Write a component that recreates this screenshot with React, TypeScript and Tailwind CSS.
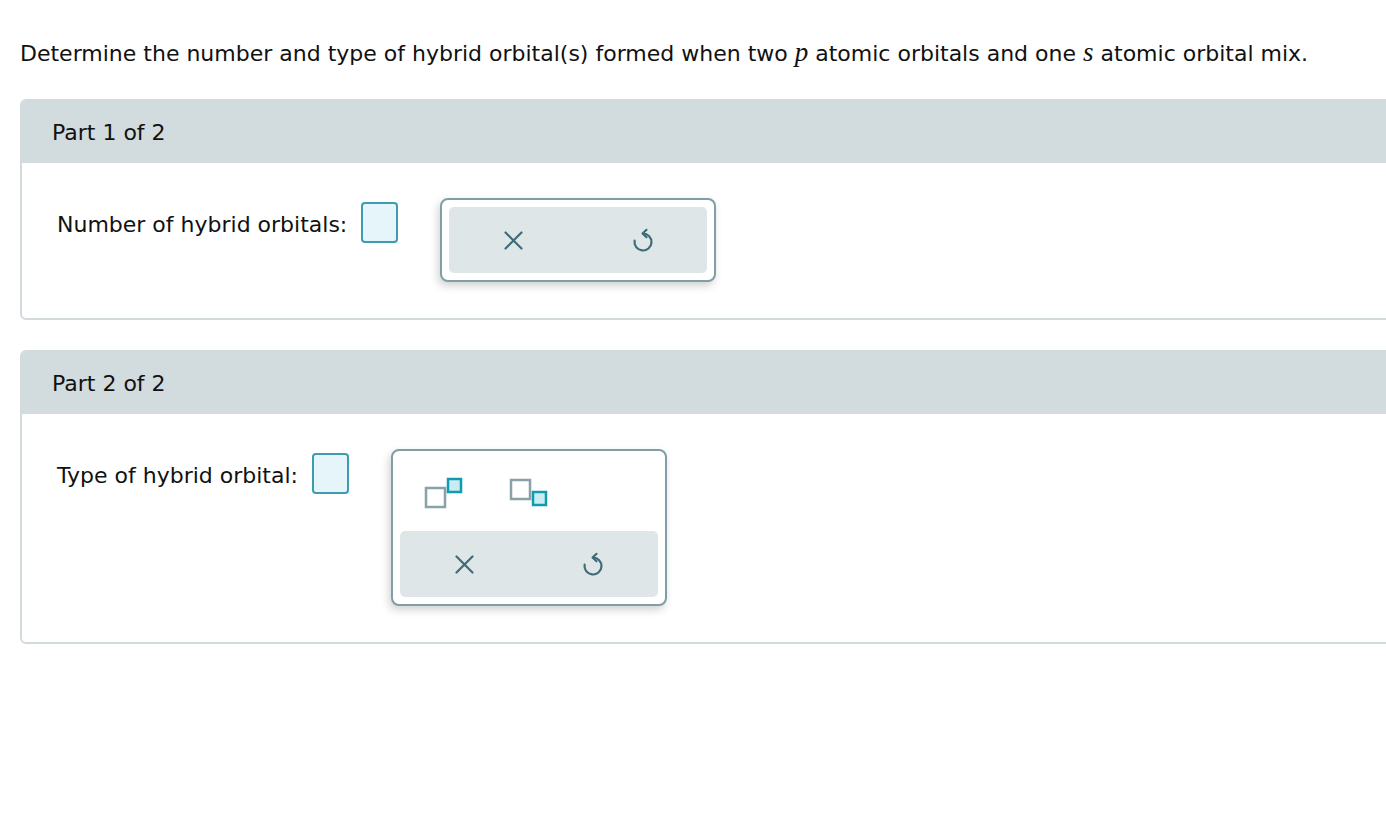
import { ReactNode } from "react"

const font = { fontFamily: '"DejaVu Sans", Verdana, sans-serif' }
const serif = { fontFamily: '"Liberation Serif", "Times New Roman", serif' }

function CloseIcon() {
  return (
    <svg width="19" height="19" viewBox="0 0 19 19" fill="none" stroke="#3e6b78" strokeWidth="2.2" strokeLinecap="round">
      <path d="M1.5 1.5 L17.5 17.5 M17.5 1.5 L1.5 17.5" />
    </svg>
  )
}

function UndoIcon() {
  return (
    <svg width="22" height="24" viewBox="0 0 22 24" fill="none" stroke="#3e6b78" strokeWidth="2.2" strokeLinecap="round" strokeLinejoin="round">
      <path d="M11 5.5 A8.5 8.5 0 1 1 2.6 12.6" />
      <path d="M14.5 1.8 L10.6 5.5 L14.5 9.2" />
    </svg>
  )
}

function SuperIcon() {
  return (
    <svg width="40" height="32" viewBox="0 0 40 32">
      <rect x="2" y="11" width="19" height="19" fill="white" stroke="#89a1a8" strokeWidth="2.5" />
      <rect x="24" y="2" width="13" height="13" fill="#c9ecf3" stroke="#0f9bb0" strokeWidth="2.5" />
    </svg>
  )
}

function SubIcon() {
  return (
    <svg width="40" height="30" viewBox="0 0 40 30">
      <rect x="2" y="2" width="19" height="19" fill="white" stroke="#89a1a8" strokeWidth="2.5" />
      <rect x="24" y="14" width="13" height="13" fill="#c9ecf3" stroke="#0f9bb0" strokeWidth="2.5" />
    </svg>
  )
}

function ActionBar() {
  return (
    <div className="flex h-[66px] w-[258px] rounded-[5px] bg-[#dfe6e8]">
      <button className="flex flex-1 items-center justify-center">
        <CloseIcon />
      </button>
      <button className="flex flex-1 items-center justify-center">
        <UndoIcon />
      </button>
    </div>
  )
}

function AnswerBox() {
  return <div className="h-[41px] w-[37px] rounded-[4px] border-2 border-[#3c9db1] bg-[#e6f5f9]" />
}

function Part({ title, label, children }: { title: string; label: string; children: ReactNode }) {
  return (
    <section className="w-[1400px] overflow-hidden rounded-l-[6px] border-2 border-[#d3dadd]">
      <div className="flex h-[62px] items-center bg-[#d2dbde] pl-[30px] text-[22px] text-[#111]">{title}</div>
      <div className="flex items-start pb-[36px] pl-[35px] pt-[35px]">
        <div className="flex items-center pt-[4px]">
          <span className="pt-[4px] text-[22px] leading-[28px] text-[#111]">{label}</span>
          <span className="ml-[14px]">
            <AnswerBox />
          </span>
        </div>
        <div className="ml-[42px] rounded-[8px] border-2 border-[#7f9ea6] bg-white p-[7px] shadow-[-2px_4px_8px_rgba(0,0,0,0.18)]">
          {children}
        </div>
      </div>
    </section>
  )
}

export default function App() {
  return (
    <div className="h-[826px] w-[1386px] overflow-hidden bg-white" style={font}>
      <div className="pl-[20px] pt-[37px]">
        <p className="text-[22px] leading-[30px] text-[#111]">
          Determine the number and type of hybrid orbital(s) formed when two{" "}
          <span className="text-[27px] italic" style={serif}>p</span> atomic orbitals and one{" "}
          <span className="text-[27px] italic" style={serif}>s</span> atomic orbital mix.
        </p>
        <div className="mt-[30px] flex flex-col gap-[30px]">
          <Part title="Part 1 of 2" label="Number of hybrid orbitals:">
            <ActionBar />
          </Part>
          <Part title="Part 2 of 2" label="Type of hybrid orbital:">
            <div className="grid h-[73px] w-[258px] grid-cols-3 pb-[4px]">
              <div className="flex items-center justify-center pl-[2px]">
                <SuperIcon />
              </div>
              <div className="flex items-center justify-center">
                <SubIcon />
              </div>
            </div>
            <ActionBar />
          </Part>
        </div>
      </div>
    </div>
  )
}
